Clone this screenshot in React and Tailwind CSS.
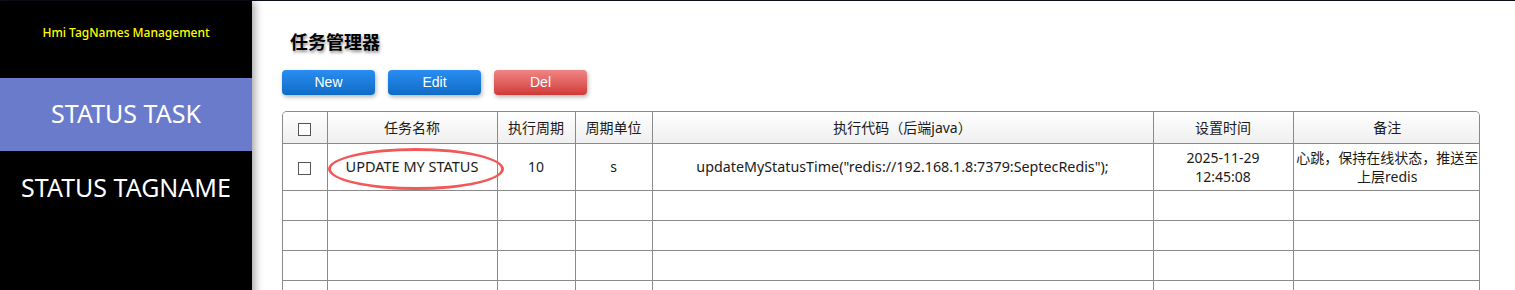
import { useState } from "react"

const cols = [
    { key: "check", label: "", w: "w-[44px]" },
    { key: "name", label: "任务名称", w: "w-[170px]" },
    { key: "period", label: "执行周期", w: "w-[78px]" },
    { key: "unit", label: "周期单位", w: "w-[77px]" },
    { key: "code", label: "执行代码（后端java）", w: "w-[501px]" },
    { key: "time", label: "设置时间", w: "w-[140px]" },
    { key: "note", label: "备注", w: "w-[188px]" },
]

const tasks = [
    {
        name: "UPDATE MY STATUS",
        period: "10",
        unit: "s",
        code: 'updateMyStatusTime("redis://192.168.1.8:7379:SeptecRedis");',
        time: ["2025-11-29", "12:45:08"],
        note: "心跳，保持在线状态，推送至上层redis",
    },
]

const Checkbox = () => (
    <span className="inline-block w-[13px] h-[13px] border border-[#555] bg-white align-middle"></span>
)

const App = () => {
    const [active, setActive] = useState("task")

    return (
        <div className="flex min-h-[290px] border-t border-[#0b0f1a] bg-white font-['Noto_Sans','Noto_Sans_CJK_SC',sans-serif] text-[#1a1a1a]">
            <aside className="relative z-10 w-[252px] shrink-0 bg-black shadow-[3px_0_8px_rgba(0,0,0,0.35)]">
                <div className="h-[77px] pt-[23px] text-center text-[12px] font-medium text-[#ffff00]">
                    Hmi TagNames Management
                </div>
                <button
                    onClick={() => setActive("task")}
                    className={`w-full h-[73px] pb-[2px] text-[25px] text-white ${active === "task" ? "bg-[#6a7bcc]" : ""}`}>
                    STATUS TASK
                </button>
                <button
                    onClick={() => setActive("tagname")}
                    className={`w-full h-[73px] text-[25px] text-white ${active === "tagname" ? "bg-[#6a7bcc]" : ""}`}>
                    STATUS TAGNAME
                </button>
            </aside>

            <main className="flex-1 pl-[30px] pr-[35px]">
                <h1 className="pl-2 pt-[29px] text-[18px] font-bold leading-6 text-black [text-shadow:1px_2px_3px_rgba(0,0,0,0.45)]">
                    任务管理器
                </h1>
                <div className="flex gap-[13px] mt-[16px] font-['Liberation_Sans',sans-serif] text-[14px] text-white">
                    <button className="w-[93px] h-[25px] rounded-[4px] bg-gradient-to-b from-[#2a8df2] to-[#0d6cc6] shadow-[1px_2px_4px_rgba(0,0,0,0.3)]">New</button>
                    <button className="w-[93px] h-[25px] rounded-[4px] bg-gradient-to-b from-[#2a8df2] to-[#0d6cc6] shadow-[1px_2px_4px_rgba(0,0,0,0.3)]">Edit</button>
                    <button className="w-[93px] h-[25px] rounded-[4px] bg-gradient-to-b from-[#f18585] to-[#cf3838] shadow-[1px_2px_4px_rgba(0,0,0,0.3)]">Del</button>
                </div>

                <div className="mt-[16px] w-[1198px] border border-b-0 border-[#8a8a8a] rounded-t-[5px] overflow-hidden">
                    <table className="w-full table-fixed border-collapse text-[14px]">
                        <thead>
                            <tr className="h-[31px] bg-gradient-to-b from-white to-[#efefef]">
                                {cols.map((c, i) => (
                                    <th key={c.key}
                                        className={`${c.w} font-normal border-b border-[#8a8a8a] ${i < cols.length - 1 ? "border-r" : ""}`}>
                                        {c.key === "check" ? <Checkbox /> : c.label}
                                    </th>
                                ))}
                            </tr>
                        </thead>
                        <tbody>
                            {tasks.map((t) => (
                                <tr key={t.name} className="h-[47px] text-center leading-[19px]">
                                    <td className="border-r border-b border-[#8a8a8a]"><Checkbox /></td>
                                    <td className="relative border-r border-b border-[#8a8a8a] text-[14.5px]">
                                        {t.name}
                                        <span className="absolute left-0 top-[4px] w-[176px] h-[42px] rounded-[50%] border-[3px] border-[#f25858]"></span>
                                    </td>
                                    <td className="border-r border-b border-[#8a8a8a]">{t.period}</td>
                                    <td className="border-r border-b border-[#8a8a8a]">{t.unit}</td>
                                    <td className="border-r border-b border-[#8a8a8a] text-[14.3px]">{t.code}</td>
                                    <td className="border-r border-b border-[#8a8a8a]">
                                        {t.time[0]}<br />{t.time[1]}
                                    </td>
                                    <td className="border-b border-[#8a8a8a] px-0">{t.note}</td>
                                </tr>
                            ))}
                            {[0, 1, 2, 3].map((r) => (
                                <tr key={r} className="h-[30px]">
                                    {cols.map((c, i) => (
                                        <td key={c.key}
                                            className={`border-b border-[#8a8a8a] ${i < cols.length - 1 ? "border-r" : ""}`}></td>
                                    ))}
                                </tr>
                            ))}
                        </tbody>
                    </table>
                </div>
            </main>
        </div>
    )
}

export default App
